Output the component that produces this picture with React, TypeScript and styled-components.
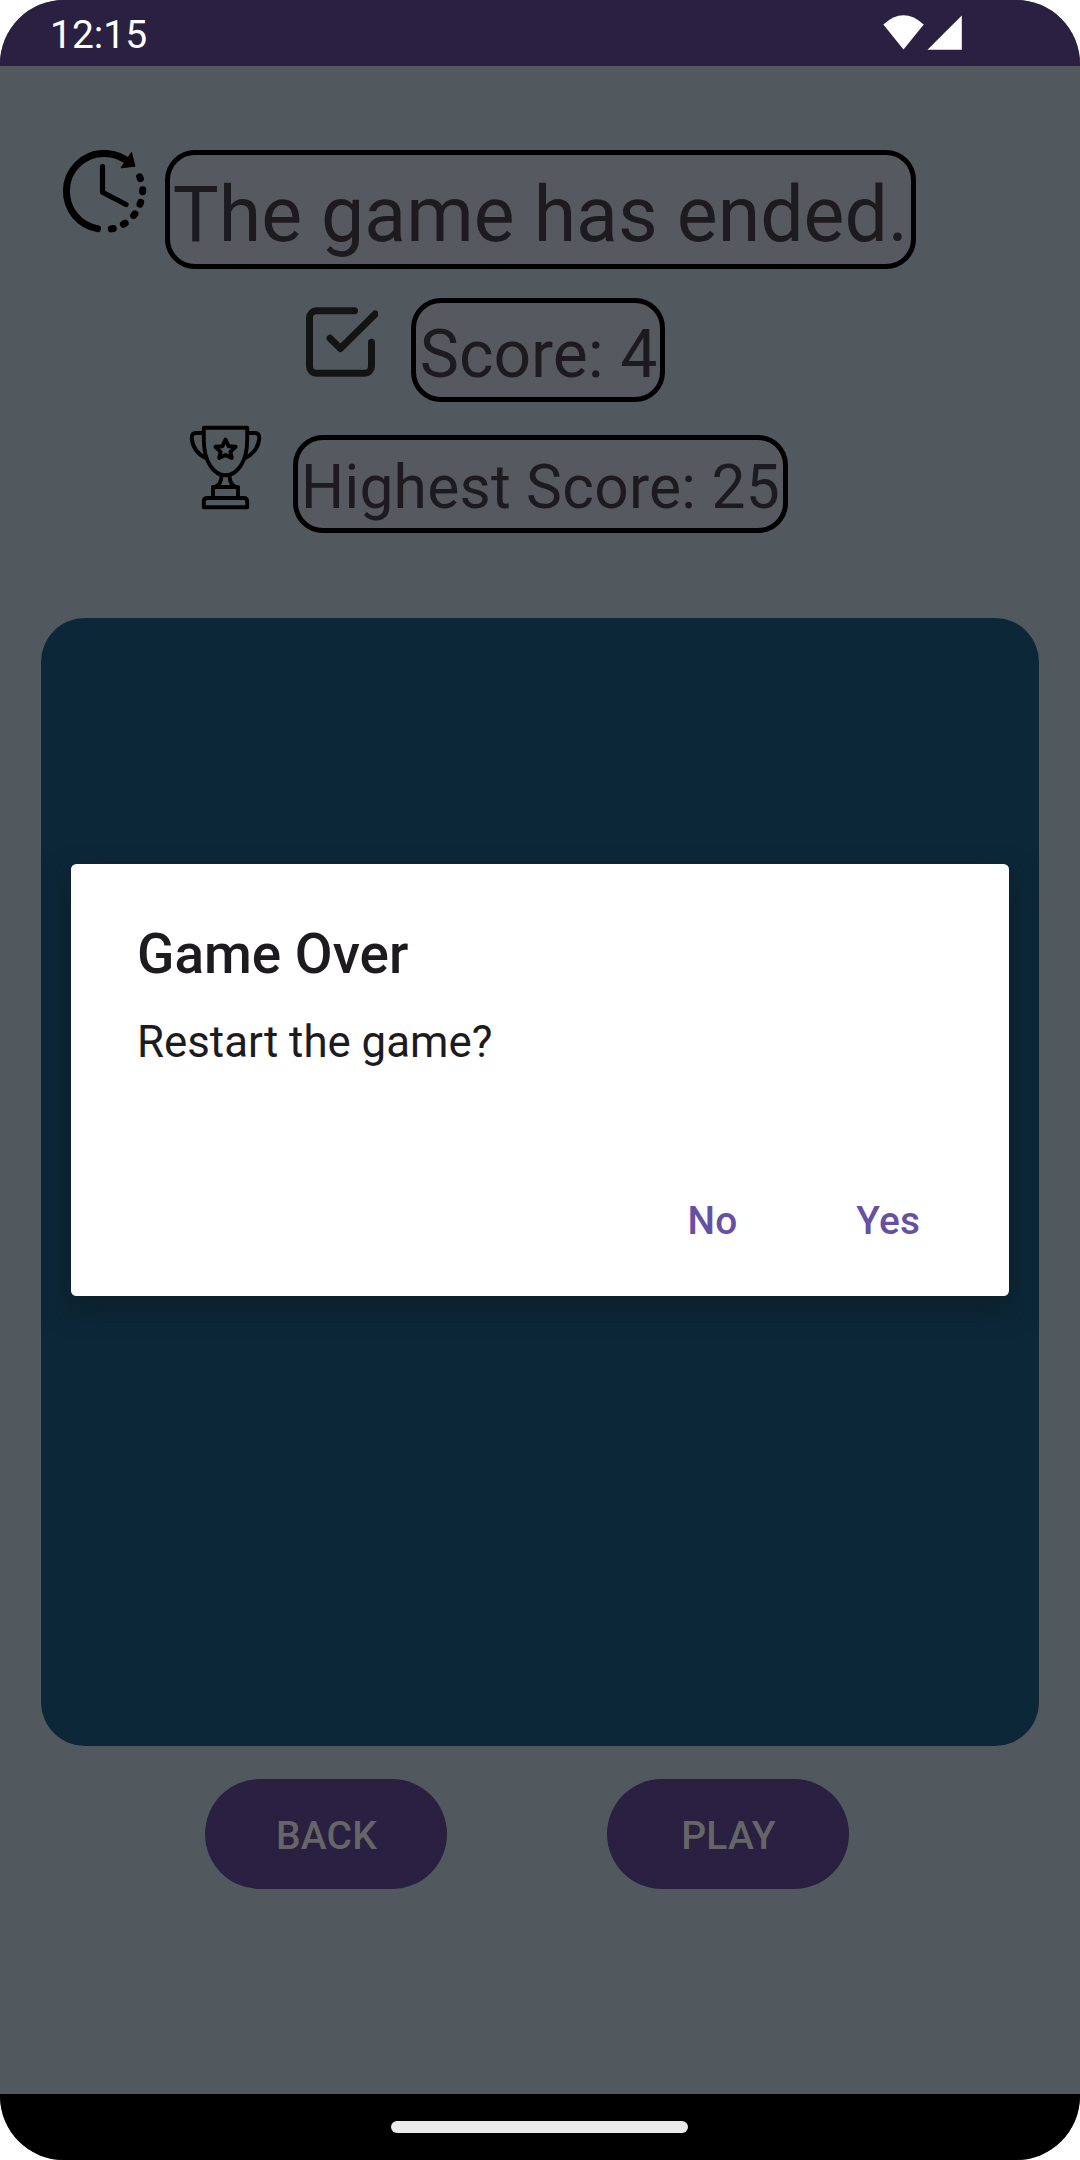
import React from "react";
import styled, { createGlobalStyle } from "styled-components";

const GlobalStyle = createGlobalStyle`
  * { box-sizing: border-box; }
  body { margin: 0; background: #fff; font-family: Roboto, "Noto Sans", sans-serif; }
  button { font-family: inherit; border: 0; padding: 0; background: none; }
`;

const Screen = styled.div`
  position: relative;
  width: 1080px;
  height: 2160px;
  display: flex;
  flex-direction: column;
  overflow: hidden;
  border-radius: 64px;
  background: #51595f;
`;

const StatusBar = styled.header`
  height: 66px;
  flex: none;
  display: flex;
  justify-content: space-between;
  align-items: flex-start;
  padding: 11px 117px 0 50px;
  background: #2a2041;
`;

const Clock = styled.time`
  padding-top: 1px;
  font-size: 39px;
  line-height: 47px;
  color: #fff;
`;

const StatusIcons = styled.svg`
  display: block;
  width: 80px;
  height: 36px;
  margin-top: 4px;
`;

const Content = styled.main`
  flex: 1;
  display: flex;
  flex-direction: column;
  padding: 84px 41px 0;
`;

const StatRow = styled.div<{ $indent: number; $height: number; $top?: number }>`
  display: flex;
  align-items: flex-start;
  height: ${(p) => p.$height}px;
  margin-top: ${(p) => p.$top ?? 0}px;
  padding-left: ${(p) => p.$indent}px;
`;

const StatIcon = styled.svg<{ $gap: number; $top?: number }>`
  display: block;
  flex: none;
  margin-top: ${(p) => p.$top ?? 0}px;
  margin-right: ${(p) => p.$gap}px;
`;

const StatLabel = styled.div<{
  $size: number;
  $width: number;
  $height: number;
  $top?: number;
  $drop: number;
  $shift?: number;
  $tracking?: number;
}>`
  width: ${(p) => p.$width}px;
  height: ${(p) => p.$height}px;
  margin-top: ${(p) => p.$top ?? 0}px;
  padding: ${(p) => p.$drop}px 0 0 ${(p) => p.$shift ?? 0}px;
  display: flex;
  align-items: center;
  justify-content: center;
  border: 5px solid #000;
  border-radius: 30px;
  background: #575960;
  color: #1d1b20;
  font-size: ${(p) => p.$size}px;
  letter-spacing: ${(p) => p.$tracking ?? 0}px;
  line-height: 1.17;
  white-space: nowrap;
`;

const Board = styled.section`
  height: 1128px;
  margin-top: 85px;
  border-radius: 44px;
  background: #0c2738;
`;

const Actions = styled.div`
  display: flex;
  gap: 160px;
  padding: 33px 0 0 164px;
`;

const PillButton = styled.button`
  width: 242px;
  height: 110px;
  border-radius: 55px;
  background: #2a2041;
  color: #666;
  font-size: 39px;
  font-weight: 500;
  letter-spacing: 0.2px;
  padding: 3px 0 0 1px;
`;

const NavBar = styled.footer`
  height: 66px;
  flex: none;
  display: flex;
  justify-content: center;
  padding: 27px 1px 0 0;
  background: #000;
`;

const NavHandle = styled.div`
  width: 297px;
  height: 12px;
  border-radius: 6px;
  background: #ebebeb;
`;

const DialogLayer = styled.div`
  position: absolute;
  inset: 0;
  display: flex;
  align-items: center;
  justify-content: center;
`;

const Dialog = styled.div`
  width: 938px;
  height: 432px;
  display: flex;
  flex-direction: column;
  padding: 57px 66px 0;
  border-radius: 5.5px;
  background: #fff;
  color: #1d1b20;
  box-shadow: 0 12px 28px rgba(12, 28, 32, 0.65);
`;

const DialogTitle = styled.h2`
  margin: 0;
  font-size: 54.9px;
  font-weight: 500;
  line-height: 66px;
`;

const DialogMessage = styled.p`
  margin: 29px 0 0;
  font-size: 43.8px;
  line-height: 52px;
`;

const DialogActions = styled.div`
  display: flex;
  justify-content: flex-end;
  gap: 119px;
  margin-top: 130px;
  padding-right: 23px;
`;

const TextButton = styled.button`
  font-size: 38.8px;
  font-weight: 500;
  line-height: 46px;
  letter-spacing: 0.15px;
  color: #6750a4;
`;

const dots = [
  [112.3, 228.7, -10],
  [124.3, 223.7, -30],
  [134.3, 214.7, -50],
  [140.3, 203.3, -72],
  [142.7, 190.7, 90],
  [140, 177.7, 70],
];

const TimerIcon = () => (
  <StatIcon $gap={17} width="88" height="84" viewBox="60 150 88 84">
    <path d="M97.5 228.6C79.5 225.5 66.4 210 66.4 191A37.8 37.6 0 0 1 104.3 153.4Q118 153.4 129 162.3" fill="none" stroke="#000" strokeWidth="7" strokeLinecap="round" />
    <path d="M131.5 152.5L135 166.2L121 167.8Z" stroke="#000" strokeLinejoin="round" />
    <path d="M102.5 166.5V192.3L126 204.5" fill="none" stroke="#000" strokeWidth="5.2" strokeLinecap="round" strokeLinejoin="round" />
    {dots.map(([x, y, a]) => (
      <rect key={x} x={x - 4.5} y={y - 3.5} width="9" height="7" rx="3.4" transform={`rotate(${a} ${x} ${y})`} />
    ))}
  </StatIcon>
);

const CheckIcon = () => (
  <StatIcon $gap={33} $top={8} width="74" height="72" viewBox="304 306 74 72" fill="none" stroke="#141414" strokeWidth="7" strokeLinecap="round" strokeLinejoin="round">
    <path d="M354.5 310.8H316.5A7 7 0 0 0 309.5 317.8V366.3A7 7 0 0 0 316.5 373.3H364.5A7 7 0 0 0 371.5 366.3V342.2" />
    <path d="M330 338.2L340.4 348.5L375.2 314" />
  </StatIcon>
);

const TrophyIcon = () => (
  <StatIcon $gap={30} width="74" height="86" viewBox="189 425 74 86" fill="none" stroke="#000" strokeWidth="3.9" strokeLinejoin="round">
    <path d="M203.8 427.7H247.2V440C247.2 462 237 475.3 225.5 475.3S203.8 462 203.8 440Z" />
    <path d="M204 433H196Q191.7 433 191.7 438C192.5 447 198 454.5 206.5 458.5" />
    <path d="M247 433H255Q259.3 433 259.3 438C258.5 447 253 454.5 244.5 458.5" />
    <path d="M225.5 439.5L228.6 446.2L235.6 446.8L230.4 451.8L231.8 458L225.5 455L219.2 458L220.6 451.8L215.4 446.8L222.4 446.2Z" />
    <path d="M221.5 476C221.5 481 219.5 485 215 487M229.5 476C229.5 481 231.5 485 236 487" />
    <path d="M213 497.5V487H238V497.5M203.8 507.2V501.5Q203.8 498 207.5 498H243.5Q247.2 498 247.2 501.5V507.2Z" />
  </StatIcon>
);

export default function App() {
  return (
    <>
      <GlobalStyle />
      <Screen>
        <StatusBar>
          <Clock>12:15</Clock>
          <StatusIcons viewBox="883 15 80 36" fill="#fff">
            <path d="M883.3 24.5Q903.5 6 923.8 24.5L903.5 49.5Z" />
            <path d="M927.5 49.7L961.8 15.5V49.7Z" />
          </StatusIcons>
        </StatusBar>
        <Content>
          <StatRow $indent={19} $height={119}>
            <TimerIcon />
            <StatLabel $size={77} $width={751} $height={119} $drop={11}>The game has ended.</StatLabel>
          </StatRow>
          <StatRow $indent={263} $height={104} $top={29}>
            <CheckIcon />
            <StatLabel $size={66} $width={254} $height={104} $drop={9} $shift={1}>Score: 4</StatLabel>
          </StatRow>
          <StatRow $indent={148} $height={108} $top={23}>
            <TrophyIcon />
            <StatLabel $size={60.5} $width={495} $top={10} $height={98} $drop={8} $tracking={0.22}>Highest Score: 25</StatLabel>
          </StatRow>
          <Board />
          <Actions>
            <PillButton>BACK</PillButton>
            <PillButton>PLAY</PillButton>
          </Actions>
        </Content>
        <NavBar>
          <NavHandle />
        </NavBar>
        <DialogLayer>
          <Dialog role="dialog">
            <DialogTitle>Game Over</DialogTitle>
            <DialogMessage>Restart the game?</DialogMessage>
            <DialogActions>
              <TextButton>No</TextButton>
              <TextButton>Yes</TextButton>
            </DialogActions>
          </Dialog>
        </DialogLayer>
      </Screen>
    </>
  );
}
